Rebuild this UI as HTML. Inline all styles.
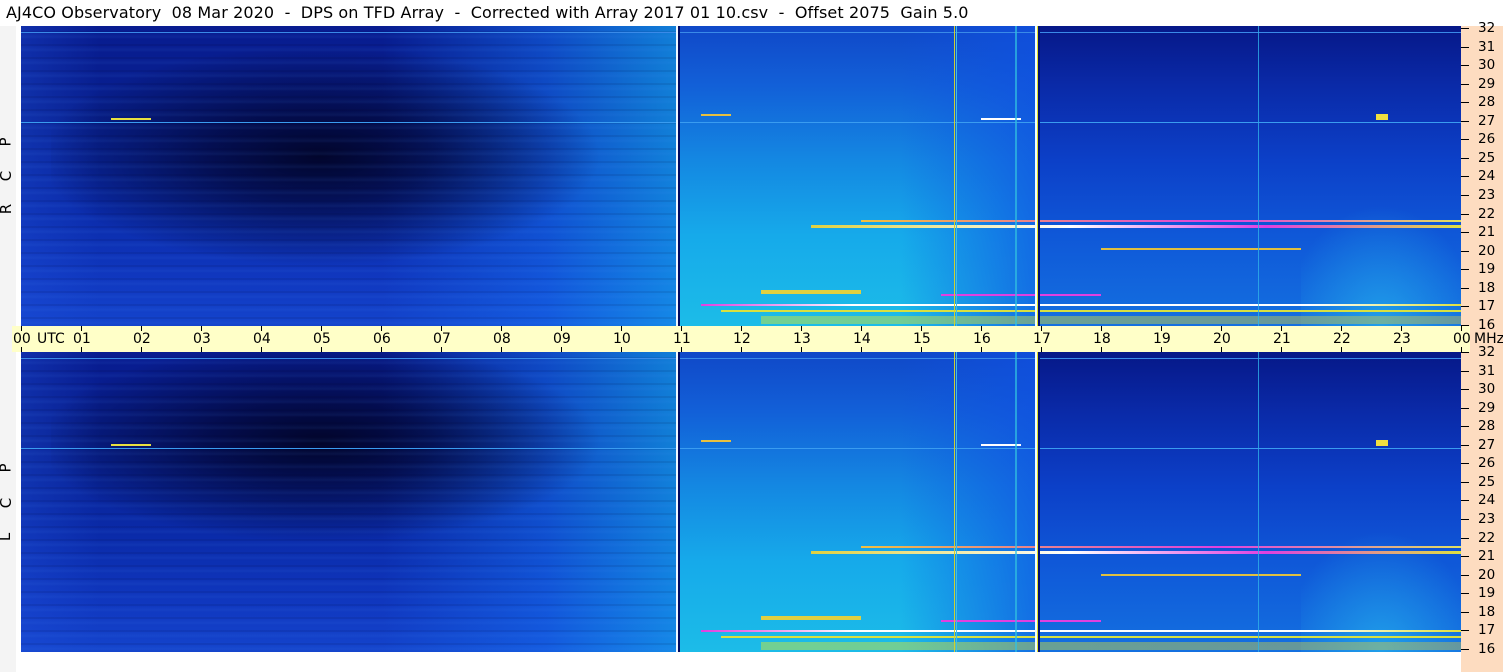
<!DOCTYPE html>
<html><head><meta charset="utf-8"><style>
*{margin:0;padding:0;box-sizing:border-box}
body{width:1503px;height:672px;background:#fff;position:relative;overflow:hidden;font-family:Tahoma,"DejaVu Sans","Liberation Sans",sans-serif;color:#000}
.abs{position:absolute}
#title{left:6px;top:3px;font-size:16px;white-space:pre;letter-spacing:0.1px}
#lcol{left:0;top:26px;width:16px;height:646px;background:#f4f4f4}
#rcol{left:1461px;top:26px;width:42px;height:646px;background:#fddcc0}
.spec{left:21px;width:1440px;height:300px;overflow:hidden}
.seg{position:absolute;top:0;height:100%}
.band{left:12px;top:326px;width:1458px;height:26px;background:#ffffc8}
.hl{position:absolute;height:2px}
.vl{position:absolute;top:0;height:100%}
.lbl{position:absolute;font-size:13px}
.vt{position:absolute;left:1px;font-size:15px;transform:rotate(-90deg);transform-origin:center}
</style></head><body>
<div id="title" class="abs">AJ4CO Observatory  08 Mar 2020  -  DPS on TFD Array  -  Corrected with Array 2017 01 10.csv  -  Offset 2075  Gain 5.0</div>
<div id="lcol" class="abs"></div>
<div id="rcol" class="abs"></div>
<div class="vt" style="top:133px">P</div>
<div class="vt" style="top:167px">C</div>
<div class="vt" style="top:200px">R</div>
<div class="vt" style="top:459px">P</div>
<div class="vt" style="top:494px">C</div>
<div class="vt" style="top:528px">L</div>

<div id="s1" class="abs spec" style="top:26px"></div>
<div id="s2" class="abs spec" style="top:352px"></div>
<div class="abs band"></div>
<div id="ax"></div>
<script>
function build(id,off){
 var s=document.getElementById(id),h='';
 h+='<div class="seg" style="left:0;width:657px;background:linear-gradient(180deg,#081c90 0%,#08208f 30%,#0a2aa8 60%,#1038c0 85%,#1444cc 100%)"></div>';
 h+='<div class="seg" style="left:0;width:657px;background:linear-gradient(90deg,rgba(30,80,220,.35) 0%,rgba(0,0,0,0) 12%,rgba(0,0,0,0) 55%,rgba(20,110,240,.55) 80%,rgba(20,160,240,.75) 100%)"></div>';
 var bt=off?-10:20, bh=off?200:220;
 h+='<div class="seg" style="left:30px;width:560px;top:'+bt+'px;height:'+bh+'px;background:radial-gradient(ellipse 50% 50% at 48% 50%,rgba(0,0,25,.85) 0%,rgba(0,0,35,.6) 40%,rgba(0,0,40,0) 100%)"></div>';
 h+='<div class="seg" style="left:0;width:1440px;background:repeating-linear-gradient(180deg,rgba(0,0,40,0) 0px,rgba(0,0,40,0) 5px,rgba(0,0,40,.18) 6px,rgba(0,0,40,0) 7px,rgba(80,150,255,.08) 11px,rgba(0,0,40,0) 13px)"></div>';
 h+='<div class="seg" style="left:657px;width:358px;background:linear-gradient(180deg,#1048c8 0%,#1260d8 20%,#1488e2 45%,#16aaea 70%,#1cbce8 100%)"></div>';
 h+='<div class="seg" style="left:880px;width:135px;background:linear-gradient(90deg,rgba(16,70,220,0),rgba(16,80,225,.7))"></div>';
 h+='<div class="seg" style="left:1017px;width:423px;background:linear-gradient(180deg,#061888 0%,#0a2aa8 20%,#0c40c8 45%,#0f58d8 70%,#1470e0 100%)"></div>';
 h+='<div class="seg" style="left:1280px;width:160px;background:radial-gradient(ellipse 60% 40% at 50% 100%,rgba(40,190,240,.6),rgba(40,190,240,0))"></div>';
 h+='<div class="hl" style="left:0;width:1440px;top:96px;height:1px;background:#3a9cf0"></div>';
 h+='<div class="hl" style="left:0;width:1440px;top:6px;height:1px;background:#3a8ae8"></div>';
 h+='<div class="hl" style="left:90px;width:40px;top:92px;background:#e8e040"></div>';
 h+='<div class="hl" style="left:680px;width:30px;top:88px;background:#e8c040"></div>';
 h+='<div class="hl" style="left:960px;width:40px;top:92px;background:#fff"></div>';
 h+='<div class="hl" style="left:1355px;width:12px;top:88px;height:6px;background:#f0e040"></div>';
 h+='<div class="hl" style="left:840px;width:600px;top:194px;background:linear-gradient(90deg,#f0c040,#e040e0 60%,#e0e060)"></div>';
 h+='<div class="hl" style="left:790px;width:650px;top:199px;height:3px;background:linear-gradient(90deg,#e0d040,#ffffff 40%,#e040e0 70%,#e0e040)"></div>';
 h+='<div class="hl" style="left:1080px;width:200px;top:222px;background:#e0c040"></div>';
 h+='<div class="hl" style="left:740px;width:100px;top:264px;height:4px;background:#e0d040"></div>';
 h+='<div class="hl" style="left:920px;width:160px;top:268px;background:#e040e0"></div>';
 h+='<div class="hl" style="left:680px;width:760px;top:278px;background:linear-gradient(90deg,#e040e0,#ffffff 20%,#ffffff 80%,#e0e040)"></div>';
 h+='<div class="hl" style="left:700px;width:740px;top:284px;background:#d8e040"></div>';
 h+='<div class="hl" style="left:740px;width:700px;top:290px;height:8px;background:linear-gradient(90deg,rgba(200,230,60,.5),rgba(220,200,60,.4))"></div>';
 h+='<div class="vl" style="left:655px;width:2px;background:#f0f8ff"></div><div class="vl" style="left:657px;width:2px;background:#000a60"></div>';
 h+='<div class="vl" style="left:1014px;width:2px;background:#f0ffff"></div><div class="vl" style="left:1016px;width:1px;background:#e0e020"></div><div class="vl" style="left:1017px;width:2px;background:#001070"></div>';
 h+='<div class="vl" style="left:933px;width:1px;background:#d0d030"></div><div class="vl" style="left:935px;width:1px;background:#40c0e0"></div>';
 h+='<div class="vl" style="left:994px;width:2px;background:#30c0e0;opacity:.7"></div>';
 h+='<div class="vl" style="left:1237px;width:1px;background:#30b0e8;opacity:.8"></div>';
 s.innerHTML=h;
}
build('s1',0);build('s2',1);
var a='';
for(var i=0;i<=24;i++){var x=21+i*60;var t=(i%24<10?'0':'')+(i%24);
 a+='<div class="abs" style="left:'+x+'px;top:326px;width:1px;height:5px;background:#000"></div>';
 a+='<div class="abs" style="left:'+x+'px;top:347px;width:1px;height:5px;background:#000"></div>';
 a+='<div class="abs lbl" style="left:'+(x-8)+'px;top:331px;font-size:14px">'+t+'</div>';}
a+='<div class="abs lbl" style="left:37px;top:331px;font-size:14px">UTC</div>';
a+='<div class="abs lbl" style="left:1474px;top:331px;font-size:14px">MHz</div>';
for(var m=16;m<=32;m++){
 [28,352].forEach(function(b,k){var y=b+Math.round((32-m)*18.55);
 a+='<div class="abs" style="left:1461px;top:'+y+'px;width:8px;height:1px;background:#000"></div>';
 a+='<div class="abs lbl" style="left:1478px;top:'+(y-8)+'px;font-size:13.5px">'+m+'</div>';});}
document.getElementById('ax').innerHTML=a;
</script>
</body></html>
